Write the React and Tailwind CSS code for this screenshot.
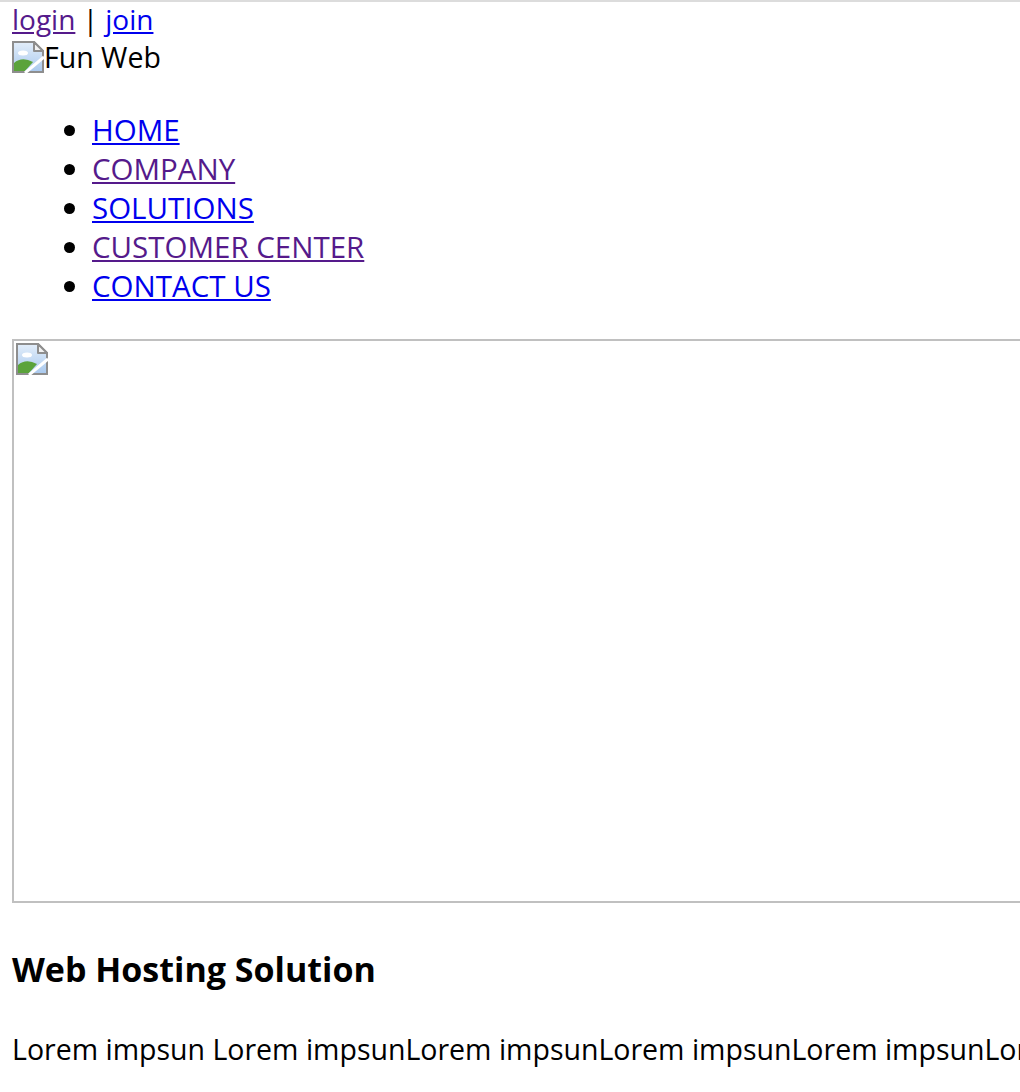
import React from "react";

function BrokenImage() {
  return (
    <svg width="32" height="32" viewBox="0 0 32 32" className="inline-block shrink-0">
      <defs>
        <linearGradient id="sky" x1="0" y1="0" x2="0" y2="1">
          <stop offset="0" stopColor="#e3eefa" />
          <stop offset="1" stopColor="#a9c9ee" />
        </linearGradient>
      </defs>
      <path d="M1 1 H22 L31 10 V31 H1 Z" fill="url(#sky)" stroke="#8e8e8e" strokeWidth="2" />
      <ellipse cx="11" cy="12" rx="5" ry="2.5" fill="#ffffff" />
      <path d="M2 30 V22 Q10 15 21 21 L13 30 Z" fill="#5ba33b" />
      <path d="M22 1 V10 H31 Z" fill="#f2f2f2" stroke="#8e8e8e" strokeWidth="2" strokeLinejoin="round" />
      <path d="M13 32 L32 16" stroke="#ffffff" strokeWidth="3" />
    </svg>
  );
}

const links = [
  { label: "HOME", visited: false },
  { label: "COMPANY", visited: true },
  { label: "SOLUTIONS", visited: false },
  { label: "CUSTOMER CENTER", visited: true },
  { label: "CONTACT US", visited: false },
];

export default function App() {
  return (
    <div
      className="w-full h-[1092px] overflow-hidden bg-white border-t-2 border-[#dcdcdc] text-black"
      style={{ fontFamily: '"Open Sans", "Noto Sans CJK KR", sans-serif' }}
    >
      <div className="w-[1500px] pl-3">
        <div className="text-[28px] leading-[34px]">
          <a href="#" className="underline text-[#551a8b]">login</a>
          {" | "}
          <a href="#" className="underline text-[#0000ee]">join</a>
        </div>
        <div className="flex items-center text-[28.5px] leading-[42px]">
          <BrokenImage />
          <span>Fun Web</span>
        </div>

        <ul className="list-disc mt-8 pl-[80px] text-[29.5px] leading-[39px]">
          {links.map((l) => (
            <li key={l.label}>
              <a
                href="#"
                className={l.visited ? "underline text-[#551a8b]" : "underline text-[#0000ee]"}
              >
                {l.label}
              </a>
            </li>
          ))}
        </ul>

        <div className="mt-[34px] h-[564px] border-2 border-[#c0c0c0] p-[2px]">
          <BrokenImage />
        </div>

        <h3 className="mt-[43px] text-[34px] leading-[46px] font-bold">Web Hosting Solution</h3>

        <p className="mt-[38px] text-[28.5px] leading-[38px] whitespace-nowrap">
          Lorem impsun Lorem impsunLorem impsunLorem impsunLorem impsunLorem impsunLorem impsun
        </p>
      </div>
    </div>
  );
}
